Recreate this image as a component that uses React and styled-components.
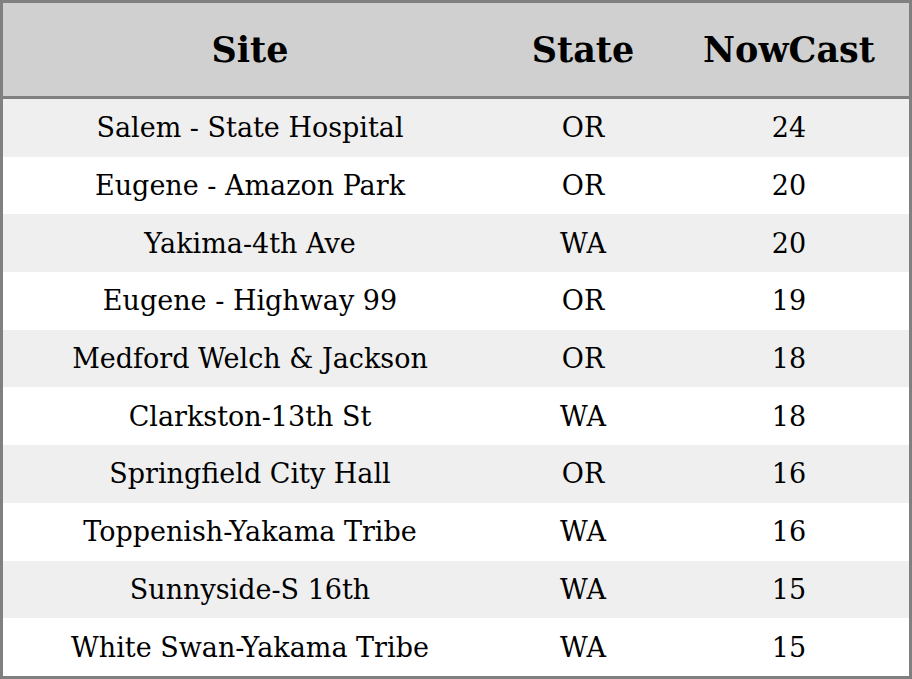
import React from "react";
import styled, { createGlobalStyle } from "styled-components";

const Global = createGlobalStyle`
  html, body { margin: 0; padding: 0; background: #ffffff; }
  #root { width: 912px; height: 679px; }
`;

const Table = styled.table`
  width: 912px;
  height: 679px;
  box-sizing: border-box;
  border: 3px solid #808080;
  border-collapse: separate;
  border-spacing: 0;
  table-layout: fixed;
  font-family: "DejaVu Serif", "Liberation Serif", serif;
  color: #000;
`;

const HeadCell = styled.th`
  height: 93px;
  padding: 0;
  background: #d0d0d0;
  border-bottom: 3px solid #808080;
  font-size: 35px;
  font-weight: bold;
  text-align: center;
  width: ${(p) => p.$w}px;
`;

const Row = styled.tr`
  background: ${(p) => (p.$odd ? "#efefef" : "#ffffff")};
`;

const Cell = styled.td`
  padding: 0;
  font-size: 27px;
  text-align: center;
  vertical-align: middle;
`;

const rows = [
  ["Salem - State Hospital", "OR", 24],
  ["Eugene - Amazon Park", "OR", 20],
  ["Yakima-4th Ave", "WA", 20],
  ["Eugene - Highway 99", "OR", 19],
  ["Medford Welch & Jackson", "OR", 18],
  ["Clarkston-13th St", "WA", 18],
  ["Springfield City Hall", "OR", 16],
  ["Toppenish-Yakama Tribe", "WA", 16],
  ["Sunnyside-S 16th", "WA", 15],
  ["White Swan-Yakama Tribe", "WA", 15],
];

export default function App() {
  return (
    <>
      <Global />
      <Table>
        <thead>
          <tr>
            <HeadCell $w={494}>Site</HeadCell>
            <HeadCell $w={172}>State</HeadCell>
            <HeadCell $w={240}>NowCast</HeadCell>
          </tr>
        </thead>
        <tbody>
          {rows.map(([site, st, v], i) => (
            <Row key={site} $odd={i % 2 === 0}>
              <Cell>{site}</Cell>
              <Cell>{st}</Cell>
              <Cell>{v}</Cell>
            </Row>
          ))}
        </tbody>
      </Table>
    </>
  );
}
